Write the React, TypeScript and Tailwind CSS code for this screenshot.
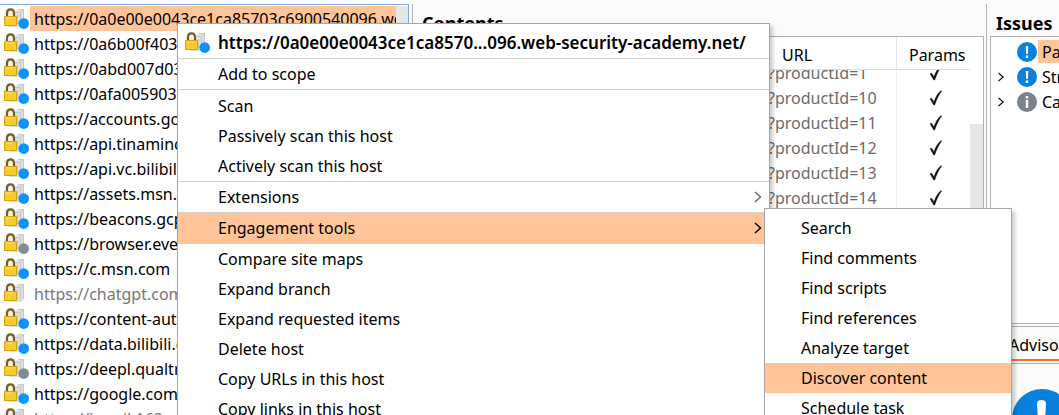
import React from "react";

type Dot = "blue" | "gray" | "none";

const hosts: { url: string; dot: Dot; selected?: boolean }[] = [
  { url: "https://0a0e00e0043ce1ca85703c6900540096.web-security-academy.net", dot: "blue", selected: true },
  { url: "https://0a6b00f403", dot: "blue" },
  { url: "https://0abd007d03", dot: "blue" },
  { url: "https://0afa005903", dot: "blue" },
  { url: "https://accounts.google.com", dot: "blue" },
  { url: "https://api.tinamind.com", dot: "blue" },
  { url: "https://api.vc.bilibili.com", dot: "blue" },
  { url: "https://assets.msn.com", dot: "blue" },
  { url: "https://beacons.gcp.gvt2.com", dot: "blue" },
  { url: "https://browser.events", dot: "gray" },
  { url: "https://c.msn.com", dot: "blue" },
  { url: "https://chatgpt.com", dot: "none" },
  { url: "https://content-aut", dot: "blue" },
  { url: "https://data.bilibili.com", dot: "blue" },
  { url: "https://deepl.qualtrics.com", dot: "gray" },
  { url: "https://google.com", dot: "blue" },
  { url: "https://hmail.163.com", dot: "none" },
];

const products = [1, 10, 11, 12, 13, 14];

const scanItems = ["Scan", "Passively scan this host", "Actively scan this host"];

const lastGroup = [
  "Compare site maps",
  "Expand branch",
  "Expand requested items",
  "Delete host",
  "Copy URLs in this host",
  "Copy links in this host",
];

const tools = [
  "Search",
  "Find comments",
  "Find scripts",
  "Find references",
  "Analyze target",
  "Discover content",
  "Schedule task",
];

function HostIcon({ dot }: { dot: Dot }) {
  return (
    <svg className="shrink-0" width="26" height="25" viewBox="0 0 26 25" aria-hidden="true">
      <rect x="0" y="4" width="16" height="15" fill="#f3f3f3" />
      <path d="M11 6L14 3.500H20V18L16.500 21H5V19H11Z" fill="#dfdfdf" />
      <path d="M11 6.500H16.500V20.500M16.500 6.500L19.500 3.500H14M19.500 3.500V17M13.500 9V18" fill="none" stroke="#c8c8c8" />
      <path d="M3 12V7.500C3 2 10 2 10 7.500V12" fill="none" stroke="#75601a" strokeWidth="2.200" />
      <rect x="0" y="10" width="13" height="10" rx="1" fill="#f8ca2c" />
      <path d="M0.500 10.500V19.500H12.500V10.500Z" fill="none" stroke="#d3a313" />
      <path d="M2 12H9" stroke="#ffe06a" />
      {dot !== "none" && <circle cx="19.700" cy="17.600" r="5.300" fill={dot === "blue" ? "#0a93fc" : "#808b97"} />}
    </svg>
  );
}

function Chevron({ className }: { className: string }) {
  return (
    <svg className={className} width="8" height="12" viewBox="0 0 8 12" fill="none" stroke="currentColor" strokeWidth="1.400" aria-hidden="true">
      <path d="M1 1L6.500 6L1 11" />
    </svg>
  );
}

function SeverityIcon({ kind }: { kind: "high" | "info" }) {
  return (
    <svg className="shrink-0" width="20" height="20" viewBox="0 0 20 20" aria-hidden="true">
      <circle cx="10" cy="10" r="10" fill={kind === "high" ? "#0880dc" : "#7b828a"} />
      {kind === "high" ? (
        <path d="M8.700 4H11.300L10.900 12H9.100ZM8.800 13.500H11.200V16H8.800Z" fill="#fff" />
      ) : (
        <path d="M8.800 4H11.200V6.400H8.800ZM8.800 8H11.200V16H8.800Z" fill="#fff" />
      )}
    </svg>
  );
}

function MenuItem({ label, sub, active }: { label: string; sub?: boolean; active?: boolean }) {
  return (
    <button
      role="menuitem"
      className={`flex h-[30px] w-full items-center justify-between pr-[7px] pl-10 text-left ${active ? "bg-[#ffc599]" : "bg-white"}`}
    >
      {label}
      {sub && <Chevron className={active ? "text-black" : "text-[#666]"} />}
    </button>
  );
}

function SiteTree() {
  return (
    <nav className="flex w-[409px] shrink-0 overflow-hidden border-t border-r border-[#7fa9d3] bg-white pt-px">
      <ul className="min-w-0 flex-1">
        {hosts.map((h) => (
          <li key={h.url} className="flex h-[25px] items-center pl-1">
            <HostIcon dot={h.dot} />
            <span
              className={`h-[25px] min-w-0 flex-1 overflow-hidden pl-1 leading-[27px] whitespace-nowrap ${
                h.selected ? "bg-[#ffc599]" : h.dot === "none" ? "text-[#777]" : ""
              }`}
            >
              {h.url}
            </span>
          </li>
        ))}
      </ul>
      <div className="w-3 bg-[#e6e6e6]" />
    </nav>
  );
}

function Contents() {
  return (
    <section className="ml-[3px] flex min-w-0 flex-1 flex-col overflow-hidden border-l border-[#b5b1b4]">
      <h2 className="h-8 pl-[9px] text-lg leading-[39px] font-bold">Contents</h2>
      <div className="mr-[2px] flex min-h-0 flex-1 flex-col border-t border-r border-[#b5adb0] bg-white">
        <table className="mr-[13px] ml-auto table-fixed border-collapse">
          <thead>
            <tr className="h-8 border-b border-[#ddd]">
              <th className="w-[128px] pt-1 pl-[14px] text-left font-normal">URL</th>
              <th className="w-[74px] border-l border-[#e6e6e6] pt-1 pl-2 text-center font-normal">Params</th>
            </tr>
          </thead>
        </table>
        <div className="flex min-h-0 flex-1 justify-end overflow-hidden">
          <table className="-mt-[9px] table-fixed border-collapse self-start">
            <tbody>
              {products.map((p) => (
                <tr key={p} className="h-[25px]">
                  <td className="w-[128px] p-0 text-[#6b6b6b]">?productId={p}</td>
                  <td className="w-[74px] border-l border-[#eee] p-0 pl-[6px]">
                    <svg className="mx-auto" width="14" height="16" viewBox="0 0 14 16" role="img" aria-label="yes">
                      <path d="M1 8.700L2.600 8.300L5 11.800C6.500 7 8.500 3.500 12.200 0.500L12.700 1C9.500 5 7.500 10 5.700 15H4.700Z" fill="#111" stroke="#111" strokeWidth="0.400" />
                    </svg>
                  </td>
                </tr>
              ))}
            </tbody>
          </table>
          <div className="w-[13px] pt-[54px]">
            <div className="h-full bg-[#e6e6e6]" />
          </div>
        </div>
      </div>
    </section>
  );
}

function Issues() {
  const rows: { label: string; kind: "high" | "info"; open?: boolean; selected?: boolean }[] = [
    { label: "Password submitted", kind: "high", selected: true },
    { label: "Strict transport", kind: "high", open: true },
    { label: "Cacheable response", kind: "info", open: true },
  ];
  return (
    <section className="flex w-[73px] shrink-0 flex-col overflow-hidden border-l border-[#b5b1b4]">
      <h2 className="h-8 pl-[9px] text-lg leading-[39px] font-bold">Issues</h2>
      <ul className="ml-[3px] h-[288px] shrink-0 border-y border-l border-[#b5adb0] bg-white pt-[2px]">
        {rows.map((r) => (
          <li key={r.label} className="flex h-[25px] items-center">
            <span className="w-[26px] shrink-0 pl-[6px]">{r.open && <Chevron className="h-[10px] text-black" />}</span>
            <SeverityIcon kind={r.kind} />
            <span className={`ml-px h-[23px] pr-2 pl-[4px] leading-[25px] whitespace-nowrap ${r.selected ? "bg-[#ffc599]" : ""}`}>
              {r.label}
            </span>
          </li>
        ))}
      </ul>
      <div className="mt-[2px] ml-[3px] flex min-h-0 flex-1 flex-col border-t border-l border-[#b5adb0]">
        <div className="flex h-[37px] shrink-0 border-b border-[#b5adb0] pb-[2px] pl-[10px]">
          <button className="border-b-2 border-[#ff6633] px-[8px] pt-1 whitespace-nowrap">Advisory</button>
        </div>
        <svg className="mt-[25px] ml-[21px] shrink-0" width="60" height="60" viewBox="0 0 60 60" aria-hidden="true">
          <circle cx="30" cy="30" r="30" fill="#0880dc" />
          <path d="M25 15Q25 11 29.500 11Q34 11 34 15L32.500 38H26.500ZM26 43H33V50H26Z" fill="#fff" />
        </svg>
      </div>
    </section>
  );
}

export default function App() {
  return (
    <main className="relative flex h-screen overflow-hidden bg-[#fbfbfb] pt-1 font-['Noto_Sans','Open_Sans',sans-serif] text-base text-black">
      <SiteTree />
      <Contents />
      <Issues />

      <div role="menu" className="absolute top-[23px] left-[177px] w-[593px] border border-[#a6a6a6] bg-white shadow-[3px_3px_4px_rgba(0,0,0,0.2)]">
        <div className="flex h-[35px] items-center border-b border-[#d2d2d2] pt-[3px] pl-[7px] text-[17px] font-semibold whitespace-nowrap">
          <HostIcon dot="blue" />
          <span className="pl-[7px]">https://0a0e00e0043ce1ca8570...096.web-security-academy.net/</span>
        </div>
        <MenuItem label="Add to scope" />
        <div className="border-t border-[#d2d2d2] pt-px">
          {scanItems.map((l) => (
            <MenuItem key={l} label={l} />
          ))}
        </div>
        <div className="border-t border-[#d2d2d2]">
          <MenuItem label="Extensions" sub />
        </div>
        <div className="border-y border-[#d2d2d2]">
          <MenuItem label="Engagement tools" sub active />
        </div>
        {lastGroup.map((l) => (
          <MenuItem key={l} label={l} />
        ))}
      </div>

      <div role="menu" className="absolute top-[208px] left-[764px] w-[248px] border border-[#a6a6a6] bg-white pt-1 shadow-[3px_3px_4px_rgba(0,0,0,0.2)]">
        {tools.map((t) => (
          <button
            key={t}
            role="menuitem"
            className={`flex h-[30px] w-full items-center pl-9 text-left ${t === "Discover content" ? "bg-[#ffc599]" : ""}`}
          >
            {t}
          </button>
        ))}
      </div>
    </main>
  );
}
